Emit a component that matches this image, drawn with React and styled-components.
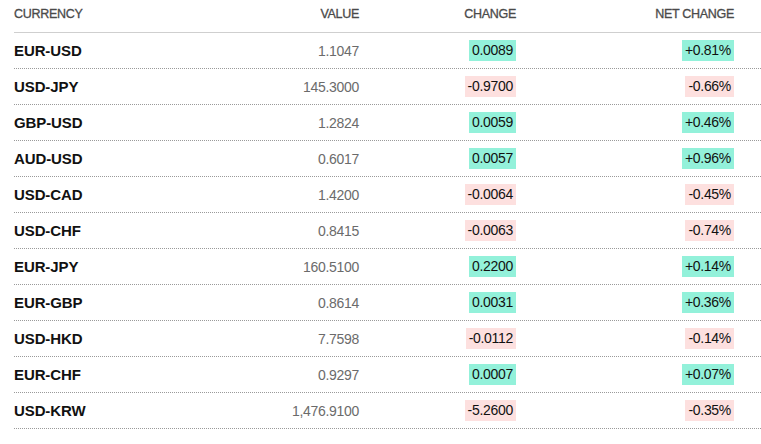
import React from 'react';
import styled, { createGlobalStyle } from 'styled-components';

const GlobalStyle = createGlobalStyle`
  body {
    margin: 0;
    background: #fff;
    font-family: "Liberation Sans", Arial, sans-serif;
  }
`

const rates = [
  { pair: 'EUR-USD', value: '1.1047', change: '0.0089', net: '+0.81%', up: true },
  { pair: 'USD-JPY', value: '145.3000', change: '-0.9700', net: '-0.66%', up: false },
  { pair: 'GBP-USD', value: '1.2824', change: '0.0059', net: '+0.46%', up: true },
  { pair: 'AUD-USD', value: '0.6017', change: '0.0057', net: '+0.96%', up: true },
  { pair: 'USD-CAD', value: '1.4200', change: '-0.0064', net: '-0.45%', up: false },
  { pair: 'USD-CHF', value: '0.8415', change: '-0.0063', net: '-0.74%', up: false },
  { pair: 'EUR-JPY', value: '160.5100', change: '0.2200', net: '+0.14%', up: true },
  { pair: 'EUR-GBP', value: '0.8614', change: '0.0031', net: '+0.36%', up: true },
  { pair: 'USD-HKD', value: '7.7598', change: '-0.0112', net: '-0.14%', up: false },
  { pair: 'EUR-CHF', value: '0.9297', change: '0.0007', net: '+0.07%', up: true },
  { pair: 'USD-KRW', value: '1,476.9100', change: '-5.2600', net: '-0.35%', up: false },
];

const Table = styled.div`
  margin-left: 14px;
  width: 747px;
`

const Row = styled.div`
  display: grid;
  grid-template-columns: 190px 155px 157px 218px;
  align-items: center;
  height: 35px;
  border-bottom: 1px dotted #9a9a9a;
`

const HeadRow = styled(Row)`
  height: 31px;
  border-bottom: 1px solid #cfcfcf;
  align-items: start;
  padding-top: 1px;
`

const HeadCell = styled.div`
  font-size: 12.5px;
  line-height: 26px;
  color: #4a4a4a;
  -webkit-text-stroke: 0.3px #4a4a4a;
  text-transform: uppercase;
  letter-spacing: -0.3px;
  text-align: ${p => (p.right ? 'right' : 'left')};
`

const Pair = styled.div`
  font-size: 15px;
  font-weight: bold;
  color: #111;
  letter-spacing: -0.1px;
`

const Value = styled.div`
  font-size: 14px;
  color: #6b6b6b;
  text-align: right;
  letter-spacing: -0.3px;
`

const BadgeCell = styled.div`
  text-align: right;
`

const Badge = styled.span`
  display: inline-block;
  font-size: 14px;
  line-height: 21px;
  padding: 0 3px;
  color: #111;
  letter-spacing: -0.3px;
  background: ${p => (p.up ? '#93f1da' : '#fde0df')};
`

export default function App() {
  return (
    <>
      <GlobalStyle />
      <Table>
        <HeadRow>
          <HeadCell>Currency</HeadCell>
          <HeadCell right>Value</HeadCell>
          <HeadCell right>Change</HeadCell>
          <HeadCell right>Net Change</HeadCell>
        </HeadRow>
        {rates.map(r => (
          <Row key={r.pair}>
            <Pair>{r.pair}</Pair>
            <Value>{r.value}</Value>
            <BadgeCell><Badge up={r.up}>{r.change}</Badge></BadgeCell>
            <BadgeCell><Badge up={r.up}>{r.net}</Badge></BadgeCell>
          </Row>
        ))}
      </Table>
    </>
  );
}
